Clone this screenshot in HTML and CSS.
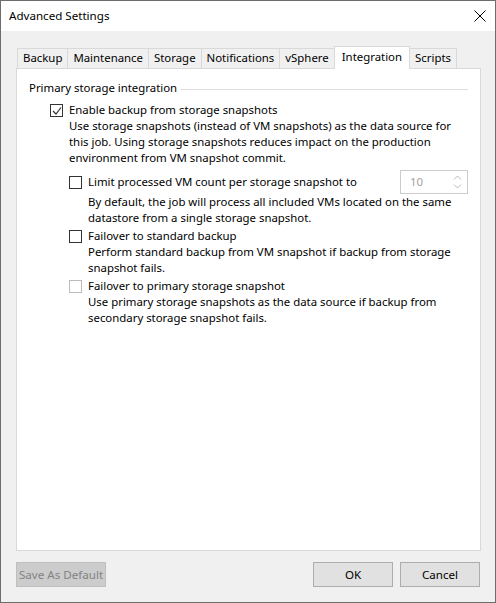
FILE: index.html
```html
<!DOCTYPE html>
<html lang="en">
<head>
    <meta charset="UTF-8">
    <title>Advanced Settings</title>
    <link rel="stylesheet" href="styles.css">
</head>
<body>
    <div class="window">
        <div class="titlebar">
            <span class="title">Advanced Settings</span>
            <svg class="close" width="12" height="12" viewBox="0 0 12 12">
                <path d="M0.5 0.5 L11.5 11.5 M11.5 0.5 L0.5 11.5" stroke="#000" stroke-width="1" fill="none"/>
            </svg>
        </div>

        <div class="body">
            <div class="tabs">
                <div class="tab">Backup</div>
                <div class="tab">Maintenance</div>
                <div class="tab">Storage</div>
                <div class="tab">Notifications</div>
                <div class="tab">vSphere</div>
                <div class="tab active">Integration</div>
                <div class="tab">Scripts</div>
            </div>

            <div class="panel">
                <div class="group-title">
                    <span>Primary storage integration</span>
                    <div class="rule"></div>
                </div>

                <div class="option">
                    <span class="check checked">
                        <svg width="10" height="10" viewBox="0 0 10 10">
                            <path d="M1 5 L4 8 L9 1.5" stroke="#333" stroke-width="1.2" fill="none"/>
                        </svg>
                    </span>
                    <div class="option-text">
                        <div>Enable backup from storage snapshots</div>
                        <div>Use storage snapshots (instead of VM snapshots) as the data source for this job. Using storage snapshots reduces impact on the production environment from VM snapshot commit.</div>
                    </div>
                </div>

                <div class="sub-options">
                    <div class="option limit">
                        <span class="check"></span>
                        <div class="option-text">
                            <div class="limit-row">
                                <span>Limit processed VM count per storage snapshot to</span>
                                <div class="spinner">
                                    <span>10</span>
                                    <svg width="9" height="14" viewBox="0 0 9 14">
                                        <path d="M1 4.5 L4.5 1 L8 4.5 M1 9.5 L4.5 13 L8 9.5" stroke="#b8b8b8" stroke-width="1" fill="none"/>
                                    </svg>
                                </div>
                            </div>
                            <div>By default, the job will process all included VMs located on the same datastore from a single storage snapshot.</div>
                        </div>
                    </div>

                    <div class="option">
                        <span class="check"></span>
                        <div class="option-text">
                            <div>Failover to standard backup</div>
                            <div>Perform standard backup from VM snapshot if backup from storage snapshot fails.</div>
                        </div>
                    </div>

                    <div class="option">
                        <span class="check disabled"></span>
                        <div class="option-text">
                            <div>Failover to primary storage snapshot</div>
                            <div>Use primary storage snapshots as the data source if backup from secondary storage snapshot fails.</div>
                        </div>
                    </div>
                </div>
            </div>

            <div class="footer">
                <button class="btn disabled">Save As Default</button>
                <div class="footer-right">
                    <button class="btn">OK</button>
                    <button class="btn">Cancel</button>
                </div>
            </div>
        </div>
    </div>
</body>
</html>
```

FILE: styles.css
```css
* {
    margin: 0;
    padding: 0;
    box-sizing: border-box;
}

body {
    width: 496px;
    height: 603px;
    font-family: 'Segoe UI', 'Noto Sans', sans-serif;
    font-size: 11.4px;
    color: #000;
    background: #f0f0f0;
}

.window {
    width: 496px;
    height: 603px;
    border: 1px solid #6d6d6d;
    display: flex;
    flex-direction: column;
}

.titlebar {
    height: 30px;
    background: #fff;
    display: flex;
    align-items: center;
    justify-content: space-between;
    padding: 0 8px 0 8px;
}

.title {
    font-size: 11.6px;
    margin-top: -2px;
}

.close {
    margin-right: 1px;
}

.body {
    flex: 1;
    background: #f0f0f0;
    padding: 15px 15px 0 15px;
    display: flex;
    flex-direction: column;
}

.tabs {
    display: flex;
    align-items: flex-end;
    height: 22px;
    padding-left: 1px;
    position: relative;
    z-index: 1;
}

.tab {
    height: 20px;
    border: 1px solid #d9d9d9;
    border-bottom: none;
    background: #f0f0f0;
    padding: 0 5px;
    line-height: 18px;
    margin-right: -1px;
}

.tab.active {
    height: 23px;
    background: #fff;
    margin-bottom: -1px;
    padding: 0 7px;
    line-height: 19px;
    position: relative;
}

.panel {
    height: 483px;
    width: 465px;
    background: #fff;
    border: 1px solid #d9d9d9;
    padding: 11px 12px 0 12px;
}

.group-title {
    display: flex;
    align-items: center;
    gap: 4px;
    line-height: 16px;
    margin-bottom: 6px;
}

.rule {
    flex: 1;
    height: 1px;
    background: #dcdcdc;
    margin-top: 2px;
}

.option {
    display: flex;
    margin-left: 21px;
    line-height: 16px;
    margin-top: 2px;
}

.option:first-child {
    margin-top: 0;
}

.check {
    width: 13px;
    height: 13px;
    border: 1px solid #333;
    background: #fff;
    flex-shrink: 0;
    margin-top: 2px;
    margin-right: 6px;
    display: flex;
    align-items: center;
    justify-content: center;
}

.check.disabled {
    border-color: #bcbcbc;
}

.option-text {
    flex: 1;
}

.sub-options {
    margin-left: 19px;
    margin-top: 4px;
}

.limit-row {
    display: flex;
    justify-content: space-between;
    align-items: center;
    height: 24px;
}

.limit .check {
    margin-top: 6px;
}

.spinner {
    width: 68px;
    height: 24px;
    border: 1px solid #cccccc;
    background: #fff;
    display: flex;
    align-items: center;
    justify-content: space-between;
    padding: 0 5px 0 9px;
    color: #a0a0a0;
}

.footer {
    display: flex;
    justify-content: space-between;
    padding: 11px 0 0 0;
}

.footer-right {
    display: flex;
    gap: 7px;
}

.btn {
    width: 80px;
    height: 25px;
    border: 1px solid #adadad;
    background: #e1e1e1;
    font-family: inherit;
    font-size: 11.6px;
    color: #000;
}

.btn.disabled {
    width: 90px;
    border-color: #bfbfbf;
    background: #cccccc;
    color: #838383;
}
```
